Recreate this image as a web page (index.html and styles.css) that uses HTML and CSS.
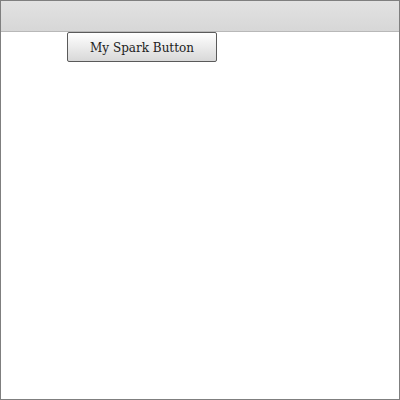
FILE: index.html
```html
<!DOCTYPE html>
<html>
<head>
<meta charset="utf-8">
<link rel="stylesheet" href="styles.css">
</head>
<body>
<div class="app">
  <div class="header"></div>
  <div class="content">
    <button class="spark-btn">My Spark Button</button>
  </div>
</div>
</body>
</html>
```
FILE: styles.css
```css
html, body { margin: 0; padding: 0; background: #fff; }
.app {
  width: 400px;
  height: 400px;
  box-sizing: border-box;
  border: 1px solid #7f7f7f;
  display: flex;
  flex-direction: column;
}
.header {
  height: 30px;
  flex: none;
  background: linear-gradient(#e2e2e2, #d7d7d7);
  border-bottom: 1px solid #b8b8b8;
}
.content {
  flex: 1;
  padding-left: 66px;
}
.spark-btn {
  display: block;
  width: 150px;
  height: 30px;
  margin: 0;
  padding: 2px 0 0 0;
  box-sizing: border-box;
  border: 1px solid #5a5a5a;
  border-radius: 2px;
  background: linear-gradient(#ffffff, #d8d8d8);
  font-family: "DejaVu Serif", serif;
  font-size: 12px;
  color: #222;
}
```
